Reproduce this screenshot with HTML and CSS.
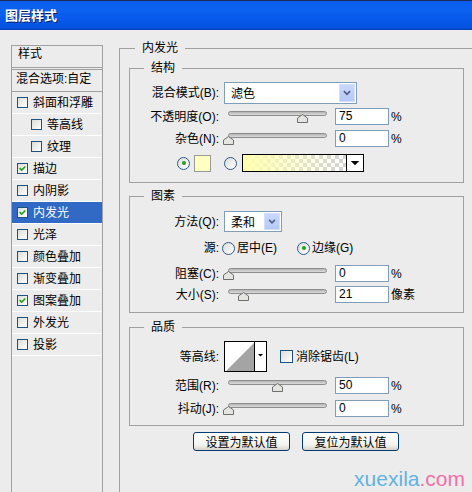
FILE: index.html
```html
<!DOCTYPE html>
<html lang="zh-CN">

<head>
    <meta charset="UTF-8">
    <meta name="viewport" content="width=device-width, initial-scale=1.0">
    <title>图层样式</title>
    <link rel="stylesheet" href="styles.css">
</head>

<body>
    <div class="titlebar">图层样式</div>
    <div class="main">
        <div class="side">
            <div class="side-head">样式</div>
            <div class="side-blend">混合选项:自定</div>
            <ul class="side-list">
                <li class="side-item"><span class="chk"></span>斜面和浮雕</li>
                <li class="side-item sub"><span class="chk"></span>等高线</li>
                <li class="side-item sub"><span class="chk"></span>纹理</li>
                <li class="side-item"><span class="chk"><svg viewBox="0 0 11 11"><polyline points="2,5 4.5,7.5 9,3" /></svg></span>描边</li>
                <li class="side-item"><span class="chk"></span>内阴影</li>
                <li class="side-item active"><span class="chk"><svg viewBox="0 0 11 11"><polyline points="2,5 4.5,7.5 9,3" /></svg></span>内发光</li>
                <li class="side-item"><span class="chk"></span>光泽</li>
                <li class="side-item"><span class="chk"></span>颜色叠加</li>
                <li class="side-item"><span class="chk"></span>渐变叠加</li>
                <li class="side-item"><span class="chk"><svg viewBox="0 0 11 11"><polyline points="2,5 4.5,7.5 9,3" /></svg></span>图案叠加</li>
                <li class="side-item"><span class="chk"></span>外发光</li>
                <li class="side-item"><span class="chk"></span>投影</li>
            </ul>
        </div>

        <div class="content">
            <fieldset class="group outer">
                <legend>内发光</legend>

                <fieldset class="group inner g-struct">
                    <legend>结构</legend>
                    <div class="row h22">
                        <span class="lbl">混合模式(B):</span>
                        <div class="select sel-wide">
                            <span class="sel-text">滤色</span>
                            <span class="sel-btn"><svg viewBox="0 0 14 18"><polyline points="3.5,7 7,10.5 10.5,7" /></svg></span>
                        </div>
                    </div>
                    <div class="row h17 mt4">
                        <span class="lbl">不透明度(O):</span>
                        <div class="slider">
                            <div class="track"></div>
                            <svg class="thumb" style="left: 69px" viewBox="0 0 11 9"><polygon points="0.5,8.5 0.5,4 5.5,0.5 10.5,4 10.5,8.5" /></svg>
                        </div>
                        <span class="num">75</span><span class="unit">%</span>
                    </div>
                    <div class="row h17 mt5">
                        <span class="lbl">杂色(N):</span>
                        <div class="slider">
                            <div class="track"></div>
                            <svg class="thumb" style="left: -5px" viewBox="0 0 11 9"><polygon points="0.5,8.5 0.5,4 5.5,0.5 10.5,4 10.5,8.5" /></svg>
                        </div>
                        <span class="num">0</span><span class="unit">%</span>
                    </div>
                    <div class="row h18 mt7 color-row">
                        <span class="radio on"></span>
                        <span class="swatch"></span>
                        <span class="radio radio-gap"></span>
                        <div class="gradient">
                            <span class="grad-fill"></span>
                            <span class="grad-btn"><svg viewBox="0 0 17 16"><polygon points="4,6 13,6 8.5,10.5" /></svg></span>
                        </div>
                    </div>
                </fieldset>

                <fieldset class="group inner g-elem">
                    <legend>图素</legend>
                    <div class="row h21">
                        <span class="lbl">方法(Q):</span>
                        <div class="select sel-small">
                            <span class="sel-text">柔和</span>
                            <span class="sel-btn"><svg viewBox="0 0 14 18"><polyline points="3.5,7 7,10.5 10.5,7" /></svg></span>
                        </div>
                    </div>
                    <div class="row h16 mt8">
                        <span class="lbl lbl-tight">源:</span>
                        <span class="opt opt-first"><span class="radio"></span><span class="opt-text">居中(E)</span></span>
                        <span class="opt"><span class="radio on"></span><span class="opt-text">边缘(G)</span></span>
                    </div>
                    <div class="row h17 mt9">
                        <span class="lbl">阻塞(C):</span>
                        <div class="slider">
                            <div class="track"></div>
                            <svg class="thumb" style="left: -5px" viewBox="0 0 11 9"><polygon points="0.5,8.5 0.5,4 5.5,0.5 10.5,4 10.5,8.5" /></svg>
                        </div>
                        <span class="num">0</span><span class="unit">%</span>
                    </div>
                    <div class="row h17 mt4">
                        <span class="lbl">大小(S):</span>
                        <div class="slider">
                            <div class="track"></div>
                            <svg class="thumb" style="left: 10px" viewBox="0 0 11 9"><polygon points="0.5,8.5 0.5,4 5.5,0.5 10.5,4 10.5,8.5" /></svg>
                        </div>
                        <span class="num">21</span><span class="unit">像素</span>
                    </div>
                </fieldset>

                <fieldset class="group inner g-quality">
                    <legend>品质</legend>
                    <div class="row h31">
                        <span class="lbl">等高线:</span>
                        <svg class="contour" viewBox="0 0 43 31">
                            <rect x="0.5" y="0.5" width="42" height="30" fill="#fff" stroke="#000" />
                            <polygon points="2,30 30,30 30,2" fill="#a4a4a4" />
                            <line x1="30.5" y1="0" x2="30.5" y2="31" stroke="#000" />
                            <polygon points="34,13 39,13 36.5,15.5" fill="#000" />
                        </svg>
                        <span class="chk chk-big"></span>
                        <span class="chk-text">消除锯齿(L)</span>
                    </div>
                    <div class="row h17 mt5">
                        <span class="lbl">范围(R):</span>
                        <div class="slider">
                            <div class="track"></div>
                            <svg class="thumb" style="left: 44px" viewBox="0 0 11 9"><polygon points="0.5,8.5 0.5,4 5.5,0.5 10.5,4 10.5,8.5" /></svg>
                        </div>
                        <span class="num">50</span><span class="unit">%</span>
                    </div>
                    <div class="row h17 mt6">
                        <span class="lbl">抖动(J):</span>
                        <div class="slider">
                            <div class="track"></div>
                            <svg class="thumb" style="left: -5px" viewBox="0 0 11 9"><polygon points="0.5,8.5 0.5,4 5.5,0.5 10.5,4 10.5,8.5" /></svg>
                        </div>
                        <span class="num">0</span><span class="unit">%</span>
                    </div>
                </fieldset>

                <div class="buttons">
                    <button class="btn">设置为默认值</button>
                    <button class="btn">复位为默认值</button>
                </div>
            </fieldset>
        </div>
    </div>
    <div class="watermark"><span class="wm-blue">xuexila</span><span class="wm-pink">.com</span></div>
</body>

</html>
```

FILE: styles.css
```css
* {
    margin: 0;
    padding: 0;
    list-style: none;
    box-sizing: border-box;
}

body {
    width: 472px;
    height: 492px;
    overflow: hidden;
    position: relative;
    background: #ececec;
    font-family: "Liberation Sans", "Noto Sans CJK SC", sans-serif;
    font-size: 12px;
    line-height: 16px;
    color: #000;
}

/* title bar */
.titlebar {
    height: 30px;
    padding-left: 5px;
    border-top: 1px solid #1d2b55;
    border-bottom: 1px solid #0a3fb8;
    background: linear-gradient(#0a5cec, #0c62f0 30%, #0658ea 70%, #0450dc);
    color: #fff;
    font-family: "Noto Sans CJK SC", sans-serif;
    font-weight: bold;
    font-size: 13px;
    line-height: 28px;
    text-shadow: 1px 1px 0 #0a1f66;
}

.main {
    display: flex;
    height: 462px;
}

/* left list */
.side {
    width: 92px;
    margin: 15px 0 0 11px;
    border: 1px solid #a0a0a0;
    border-bottom: none;
    flex-shrink: 0;
}

.side-head {
    height: 22px;
    padding-left: 6px;
    border-bottom: 1px solid #a0a0a0;
}

.side-blend {
    height: 23px;
    margin-top: 1px;
    padding: 1px 0 0 4px;
    border-top: 1px solid #a0a0a0;
    border-bottom: 1px solid #a0a0a0;
}

.side-item {
    height: 22px;
    padding-left: 5px;
    display: flex;
    align-items: center;
    border-bottom: 1px solid #fff;
}

.side-item.sub {
    padding-left: 19px;
}

.side-item.active {
    background: #316ac5;
    color: #fff;
}

.chk {
    width: 11px;
    height: 11px;
    margin-right: 5px;
    border: 1px solid #1c5180;
    background: linear-gradient(135deg, #dcdcd7, #fff);
    flex-shrink: 0;
    display: block;
}

.chk svg {
    display: block;
    width: 9px;
    height: 9px;
    fill: none;
    stroke: #21a121;
    stroke-width: 2;
}

.chk-big {
    width: 13px;
    height: 13px;
    margin: 0 3px 0 13px;
}

/* right side */
.content {
    flex: 1;
    margin-left: 16px;
    padding-top: 10px;
    display: flex;
    flex-direction: column;
}

fieldset.group {
    border: 1px solid #a0a0a0;
    min-width: 0;
}

fieldset.group legend {
    margin-left: 14px;
    padding: 0 7px;
    height: 16px;
    line-height: 16px;
}

fieldset.outer {
    flex: 1;
    border-right: none;
    border-bottom: none;
}

fieldset.outer > legend {
    margin-left: 15px;
}

fieldset.inner {
    width: 335px;
    margin-left: 9px;
}

.g-struct {
    margin-top: 4px;
    padding: 6px 0 10px;
}

.g-elem {
    margin-top: 5px;
    padding: 7px 0 9px;
}

.g-quality {
    margin-top: 6px;
    padding: 6px 0 8px;
}

.row {
    display: flex;
    align-items: center;
}

.h16 { height: 16px; }
.h17 { height: 17px; }
.h18 { height: 18px; }
.h21 { height: 21px; }
.h22 { height: 22px; }
.h31 { height: 31px; }
.mt4 { margin-top: 4px; }
.mt5 { margin-top: 5px; }
.mt6 { margin-top: 6px; }
.mt7 { margin-top: 7px; }
.mt8 { margin-top: 8px; }
.mt9 { margin-top: 9px; }

.lbl {
    width: 89px;
    margin-right: 5px;
    text-align: right;
    flex-shrink: 0;
    white-space: nowrap;
}

.lbl-tight {
    margin-right: 3px;
}

/* combo boxes */
.select {
    height: 100%;
    display: flex;
    border: 1px solid #7f9db9;
    background: #fff;
}

.sel-wide {
    width: 133px;
}

.sel-small {
    width: 58px;
}

.sel-text {
    flex: 1;
    padding-left: 6px;
    line-height: 19px;
    font-family: "Noto Sans CJK SC", sans-serif;
}

.sel-btn {
    width: 16px;
    margin: 1px;
    border: 1px solid #d2defa;
    background: linear-gradient(#c9d8fb, #b5c9f7);
}

.sel-btn svg {
    display: block;
    width: 14px;
    height: 100%;
    fill: none;
    stroke: #4d6185;
    stroke-width: 2;
}

/* sliders */
.slider {
    position: relative;
    width: 99px;
    height: 17px;
    margin: 0 8px 0 4px;
    flex-shrink: 0;
}

.track {
    margin-top: 3px;
    height: 5px;
    border: 1px solid #8c8c8c;
    border-radius: 3px;
    background: linear-gradient(#b4b4b4, #dcdcdc);
}

.thumb {
    position: absolute;
    top: 6px;
    width: 11px;
    height: 9px;
    fill: #e4e4e0;
    stroke: #6e6e6e;
}

.num {
    width: 54px;
    height: 17px;
    padding-left: 3px;
    border: 1px solid #7f9db9;
    background: #fff;
    line-height: 15px;
    flex-shrink: 0;
}

.unit {
    margin-left: 2px;
    white-space: nowrap;
}

/* radios */
.radio {
    width: 13px;
    height: 13px;
    border-radius: 50%;
    border: 1px solid #2f5a8c;
    background: linear-gradient(135deg, #dcdcd7, #fff);
    position: relative;
    flex-shrink: 0;
    display: block;
}

.radio.on::after {
    content: "";
    position: absolute;
    left: 3.5px;
    top: 3.5px;
    width: 4px;
    height: 4px;
    border-radius: 50%;
    background: #21a121;
}

/* colour row */
.color-row {
    padding-left: 47px;
}

.swatch {
    width: 17px;
    height: 17px;
    margin-left: 4px;
    border: 1px solid #9a9a9a;
    background: #ffffc2;
}

.radio-gap {
    margin-left: 13px;
}

.gradient {
    width: 122px;
    height: 18px;
    margin-left: 5px;
    display: flex;
    border: 1px solid #000;
    background: #fff;
}

.grad-fill {
    flex: 1;
    background:
        linear-gradient(to right, #ffffb0, rgba(255, 255, 176, 0) 95%),
        conic-gradient(#d4d4d4 25%, #fff 0 50%, #d4d4d4 0 75%, #fff 0) 0 0 / 8px 8px;
}

.grad-btn {
    width: 17px;
    border-left: 1px solid #000;
}

.grad-btn svg {
    display: block;
    width: 16px;
    height: 16px;
    fill: #000;
}

/* source options */
.opt {
    display: flex;
    align-items: center;
}

.opt-first {
    width: 75px;
}

.opt-text {
    margin-left: 2px;
}

.contour {
    width: 43px;
    height: 31px;
    flex-shrink: 0;
}

/* buttons */
.buttons {
    display: flex;
    justify-content: center;
    gap: 12px;
    margin-top: 6px;
}

.btn {
    width: 97px;
    height: 19px;
    border: 1px solid #003c74;
    border-radius: 3px;
    background: linear-gradient(#fff, #f3f3ee 70%, #d8d3c8);
    font-family: "Noto Sans CJK SC", sans-serif;
    font-size: 12px;
    line-height: 16px;
    color: #000;
}

.watermark {
    position: absolute;
    right: 7px;
    bottom: 1px;
    font-family: "Liberation Sans", sans-serif;
    font-size: 21px;
    line-height: 24px;
}

.wm-blue {
    color: #64b2de;
}

.wm-pink {
    color: #f070a8;
}
```
